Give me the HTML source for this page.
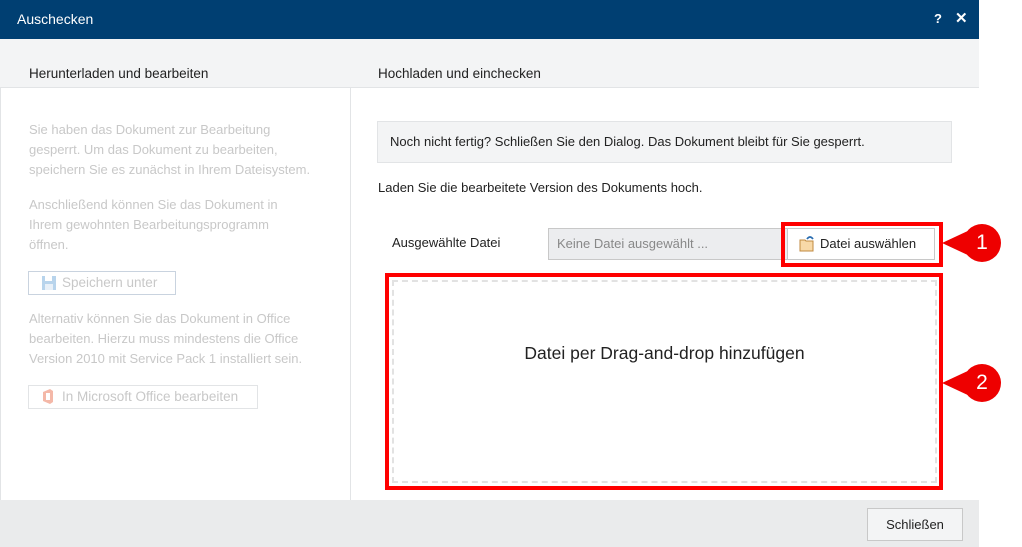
<!DOCTYPE html>
<html><head><meta charset="utf-8"><style>
*{margin:0;padding:0;box-sizing:border-box}
body{width:1022px;height:547px;background:#fff;font-family:"Liberation Sans",sans-serif;font-size:13px;color:#333;position:relative;overflow:hidden}
.a{position:absolute}
.hdr{left:0;top:0;width:979px;height:39px;background:#003f72;color:#fff}
.band{left:0;top:39px;width:979px;height:49px;background:#f3f4f5;border-bottom:1px solid #e2e4e6}
.lt{color:#c8c8c8;line-height:20px}
.btnl{border:1px solid #c9d3df;height:24px;color:#c8c8c8;padding-left:33px;line-height:22px;font-size:13.5px}
.red{border:4px solid #f00}
.call{width:38px;height:38px;border-radius:50%;background:#e00;color:#fff;font-size:21px;text-align:center;line-height:38px}
.tri{width:0;height:0;border-top:14px solid transparent;border-bottom:14px solid transparent;border-right:30px solid #e00}
</style></head><body>
<div class="a hdr"><span class="a" style="left:17px;top:11px;font-size:14px">Auschecken</span>
<span class="a" style="left:934px;top:11px;font-weight:bold;font-size:13px">?</span>
<span class="a" style="left:955px;top:9px;font-weight:bold;font-size:15px">✕</span></div>
<div class="a band"></div>
<div class="a" style="left:29px;top:66px;font-size:13.5px;color:#222">Herunterladen und bearbeiten</div>
<div class="a" style="left:378px;top:66px;font-size:13.5px;color:#222">Hochladen und einchecken</div>
<div class="a" style="left:0;top:88px;width:1px;height:412px;background:#e2e4e6"></div>
<div class="a" style="left:350px;top:88px;width:1px;height:412px;background:#e2e4e6"></div>
<div class="a lt" style="left:29px;top:120px;width:320px">Sie haben das Dokument zur Bearbeitung<br>gesperrt. Um das Dokument zu bearbeiten,<br>speichern Sie es zunächst in Ihrem Dateisystem.</div>
<div class="a lt" style="left:29px;top:195px;width:320px">Anschließend können Sie das Dokument in<br>Ihrem gewohnten Bearbeitungsprogramm<br>öffnen.</div>
<div class="a btnl" style="left:28px;top:271px;width:148px">Speichern unter</div>
<svg class="a" style="left:42px;top:276px" width="14" height="14"><rect x="0" y="0" width="14" height="14" fill="#b8d4ec"/><rect x="3" y="0" width="7" height="5" fill="#fff"/><rect x="3" y="8" width="8" height="6" fill="#e8f0f8"/></svg>
<div class="a lt" style="left:29px;top:309px;width:320px">Alternativ können Sie das Dokument in Office<br>bearbeiten. Hierzu muss mindestens die Office<br>Version 2010 mit Service Pack 1 installiert sein.</div>
<div class="a btnl" style="left:28px;top:385px;width:230px;border-color:#e2e4e6">In Microsoft Office bearbeiten</div>
<svg class="a" style="left:42px;top:389px" width="12" height="15"><path d="M1 3 L8 0 L11 2 L11 13 L8 15 L1 12 Z" fill="#f4b8a8"/><rect x="4" y="4" width="4" height="7" fill="#fff"/></svg>
<div class="a" style="left:377px;top:121px;width:575px;height:42px;background:#f3f4f5;border:1px solid #e2e4e6;padding:12px 0 0 12px;color:#222">Noch nicht fertig? Schließen Sie den Dialog. Das Dokument bleibt für Sie gesperrt.</div>
<div class="a" style="left:378px;top:180px;color:#222">Laden Sie die bearbeitete Version des Dokuments hoch.</div>
<div class="a" style="left:392px;top:235px;color:#222">Ausgewählte Datei</div>
<div class="a" style="left:548px;top:228px;width:240px;height:32px;background:#ecedef;border:1px solid #c8c8c8;color:#888;padding:7px 0 0 8px">Keine Datei ausgewählt ...</div>
<div class="a" style="left:787px;top:228px;width:148px;height:32px;background:#fff;border:1px solid #c8c8c8;padding:7px 0 0 32px;color:#222">Datei auswählen</div>
<svg class="a" style="left:799px;top:235px" width="16" height="17"><path d="M1 5 H6 L7 6 H14 V16 H1 Z" fill="#f8d9a8" stroke="#c08a40"/><path d="M8 4 Q11 0 14 4" stroke="#2a6db0" stroke-width="1.8" fill="none"/></svg>
<div class="a red" style="left:781px;top:222px;width:162px;height:45px"></div>
<div class="a red" style="left:385px;top:273px;width:558px;height:217px"></div>
<div class="a" style="left:392px;top:280px;width:545px;height:203px;border:2px dashed #e2e2e2"></div>
<div class="a" style="left:392px;top:343px;width:545px;text-align:center;font-size:17.5px;color:#222">Datei per Drag-and-drop hinzufügen</div>
<div class="a tri" style="left:942px;top:229px"></div><div class="a call" style="left:963px;top:224px">1</div>
<div class="a tri" style="left:942px;top:369px"></div><div class="a call" style="left:963px;top:364px">2</div>
<div class="a" style="left:0;top:500px;width:979px;height:47px;background:#eaebec"></div>
<div class="a" style="left:867px;top:508px;width:96px;height:33px;background:#f3f4f5;border:1px solid #c8c8c8;text-align:center;line-height:31px;color:#222">Schließen</div>
</body></html>
